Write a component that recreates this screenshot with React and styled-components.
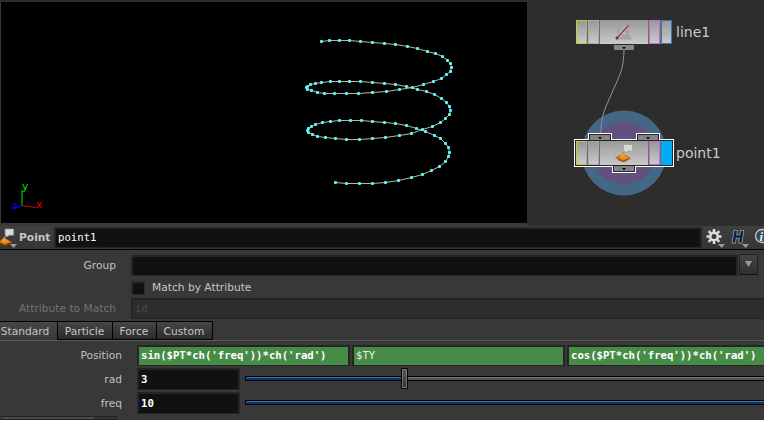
import React from 'react';
import styled, { createGlobalStyle, css } from 'styled-components';

const Global = createGlobalStyle`
  * { box-sizing: border-box; }
  html, body { margin: 0; background: #fff; overflow: hidden; }
  body { font-family: "DejaVu Sans", sans-serif; font-size: 10.67px; color: #c5c5c5; }
`;

const Window = styled.main`
  width: 764px;
  height: 420px;
  overflow: hidden;
  background: #383838;
`;

const Workspace = styled.section`
  display: flex;
  height: 226px;
  background: #2d2d2d;
`;

const ViewportPane = styled.div`
  width: 527px;
  padding: 2px 0 3px 1px;
  background: linear-gradient(#2d2d2d 2px, #383838 2px);
`;

const Viewport = styled.svg`
  display: block;
  width: 526px;
  height: 221px;
  background: #000;
`;

const Network = styled.div`
  position: relative;
  flex: 1;
  overflow: hidden;
`;

const Layer = styled.svg`
  position: absolute;
  inset: 0;
  width: 237px;
  height: 226px;
`;

const Node = styled.div`
  position: absolute;
  left: 49px;
  top: ${(p) => p.$top}px;
  display: flex;
  align-items: center;
  height: 24px;
`;

const NodeBody = styled.div`
  display: flex;
  gap: 1px;
  width: 96px;
  height: 24px;
  background: #6d6d6d;
`;

const metal = css`background: linear-gradient(#999, #cacaca);`;

const Flag = styled.div`
  width: 11px;
  border: 1px solid ${(p) => p.$color};
  ${metal}
  ${(p) => p.$open && css`border-right-color: #a9a9a9;`}
  ${(p) => p.$on && css`background: ${p.$color};`}
`;

const NodeFace = styled.div`
  flex: 1;
  display: grid;
  place-items: center;
  ${metal}
`;

const NodeName = styled.span`
  margin-left: 4px;
  font-size: 14px;
  line-height: 20px;
  color: #c9c9c9;
`;

const Header = styled.header`
  display: flex;
  align-items: flex-start;
  height: 24px;
  padding-top: 1px;
  border-bottom: 1px solid #000;
  background: linear-gradient(#404040, #343434);
`;

const HeaderIcon = styled.svg`
  flex: none;
  width: ${(p) => p.$w}px;
  height: 22px;
`;

const OperatorType = styled.b`
  width: 35px;
  line-height: 21px;
  white-space: nowrap;
`;

const Field = styled.div`
  flex: none;
  width: ${(p) => p.$w}px;
  height: ${(p) => p.$h || 21}px;
  padding-left: 2px;
  border: 2px solid #252525;
  border-bottom-width: 1px;
  background: ${(p) => p.$bg || '#111'};
  color: ${(p) => p.$fg || '#fff'};
  font: ${(p) => (p.$bold ? 'bold' : 'normal')} 10.67px/${(p) => p.$line || 18}px "DejaVu Sans Mono", monospace;
  letter-spacing: ${(p) => (p.$bold ? '-0.02px' : 'normal')};
  white-space: pre;
  overflow: hidden;
`;

const Row = styled.div`
  display: flex;
  align-items: center;
  height: ${(p) => p.$h}px;
  margin-bottom: ${(p) => p.$after || 0}px;
`;

const Label = styled.span`
  flex: none;
  width: ${(p) => p.$w}px;
  margin-right: 15px;
  text-align: right;
  color: ${(p) => (p.$dim ? '#747474' : '#c0c0c0')};
`;

const Parameters = styled.section`
  height: 71px;
  padding-top: 4px;
`;

const MenuButton = styled.button`
  display: grid;
  place-items: center;
  width: 19px;
  height: 21px;
  margin: -2px 0 0 1px;
  padding: 0 0 1px;
  border: 1px solid #222;
  border-bottom-color: #111;
  background: linear-gradient(#424242, #303030);
`;

const CheckBox = styled.span`
  width: 14px;
  height: 14px;
  margin-right: 7px;
  border: 2px solid #292929;
  border-right-width: 1px;
  border-bottom-width: 1px;
  background: #111;
`;

const Tabs = styled.nav`
  display: flex;
  height: 20px;
  border-bottom: 1px solid #585858;
`;

const Tab = styled.button`
  width: ${(p) => p.$w}px;
  height: 19px;
  padding: ${(p) => (p.$active ? '1px 7px 0 0' : '1px 1px 0 0')};
  border: solid #000;
  border-width: ${(p) => (p.$active ? '1px 0 0' : '1px 1px 1px 0')};
  ${(p) => p.$first && css`border-left-width: 1px;`}
  background: ${(p) => (p.$active ? 'linear-gradient(#464646, #383838)' : 'linear-gradient(#464646, #2b2b2b)')};
  color: #c5c5c5;
  font: 10.67px/17px "DejaVu Sans", sans-serif;
  white-space: nowrap;
`;

const Channels = styled.section`
  padding-top: 4px;
`;

const Vector = styled.div`
  display: flex;
  gap: 2px;
`;

const Slider = styled.div`
  flex: 1;
  display: flex;
  align-items: center;
  height: 21px;
  margin: 0 0 1px 5px;
`;

const Track = styled.div`
  flex: ${(p) => (p.$w ? `0 0 ${p.$w}px` : 1)};
  height: 5px;
  border: solid #000;
  border-width: 1px 0 1px ${(p) => (p.$start ? 1 : 0)}px;
  background: ${(p) => (p.$filled ? 'linear-gradient(#526f91 1px, #073671 1px)' : 'linear-gradient(#777 1px, #505050 1px)')};
`;

const Handle = styled.div`
  flex: none;
  width: 7px;
  height: 21px;
  border: 1px solid #000;
  border-radius: 1px;
  box-shadow: inset 0 0 0 1px #747474;
  background: linear-gradient(#555, #333);
`;

const NextControl = styled.div`
  display: flex;
  width: 116px;
  height: 4px;
  margin: 1px 0 0 1px;
  border: 1px solid #222;
  background: #333;
  &::before { content: ''; width: 92px; background: #4b4b4b; }
`;

const points = [
  [321,41],[329,40],[339,40],[349,40],[360,41],[372,42],[384,43],[395,44],[407,46],[417,48],
  [427,51],[435,53],[442,56],[447,60],[450,63],[451,67],[450,71],[446,74],[441,78],[433,81],
  [423,84],[412,87],[399,89],[386,91],[372,92],[358,93],[346,93],[334,93],[324,93],[317,92],
  [311,90],[307,89],[306,87],[307,86],[310,84],[315,83],[321,82],[330,81],[339,81],[349,81],
  [360,81],[372,82],[384,83],[395,84],[406,86],[417,89],[426,91],[434,94],[441,98],[446,102],
  [449,106],[450,110],[449,114],[445,118],[440,122],[432,126],[422,129],[411,133],[399,135],
  [385,137],[372,138],[359,139],[346,139],[335,138],[325,137],[317,136],[312,134],[308,132],
  [307,130],[308,128],[311,126],[315,124],[322,122],[330,121],[339,120],[350,120],[361,120],
  [372,121],[384,122],[395,123],[406,125],[416,128],[425,131],[434,135],[440,138],[445,143],
  [448,147],[449,152],[448,156],[445,161],[439,166],[431,170],[422,174],[411,177],[398,180],
  [385,182],[372,183],[359,183],[346,183],[335,182],
];

const Triangle = ({ x, y, fill = '#999' }) => <path d={`M${x} ${y}h7l-3.5 4z`} fill={fill} />;

function PointGlyph() {
  return (
    <g>
      <path d="M0 14 5.500 11h5L16 14.500 8.500 18z" fill="#bd5d10" />
      <path d="M3 13.800 7 11.500h3l3.500 2.500-5 2z" fill="#f98f1d" />
      <path d="M3 15.500 8.500 18 13 15.500" stroke="#874207" strokeWidth=".8" fill="none" />
      <path d="M7.500 12V9.500L11.500 6" stroke="#9e9169" strokeWidth="1.500" fill="none" />
      <path d="M8.500 .5h9v6.500H13l-2.500 2-1-2h-1z" fill="#d8dad4" stroke="#999" strokeWidth=".6" />
      <circle cx="7.500" cy="11.500" r="1.800" fill="#d6ad34" />
    </g>
  );
}

function LineGlyph() {
  return (
    <svg width="20" height="20" viewBox="0 0 20 20">
      <path d="M4.500 1v15.500h13M4 11l4 5M5 12l9 3V8M11 7l4 8" stroke="#a2a0a0" strokeWidth="2" fill="none" />
      <path d="m3 16 11-12" stroke="#e5c5bb" strokeWidth="3" />
      <path d="m3 16 11-12" stroke="#5b4545" strokeWidth="1.500" />
      <path d="m7 11 6-7" stroke="#b16962" strokeDasharray="2 2" />
      <circle cx="3" cy="16" r="1.500" fill="#4c3535" />
      <circle cx="14" cy="4" r="1.500" fill="#bd6558" />
    </svg>
  );
}

function NetworkNode({ top, name, displayed, children }) {
  return (
    <Node $top={top}>
      <NodeBody>
        <Flag $color="#c9c832" $open />
        <Flag $color="#aaa" />
        <NodeFace>{children}</NodeFace>
        <Flag $color="#cf6bd0" />
        <Flag $color={displayed ? '#00adf5' : '#3479b5'} $on={displayed} />
      </NodeBody>
      <NodeName>{name}</NodeName>
    </Node>
  );
}

function SceneView() {
  return (
    <ViewportPane>
      <Viewport viewBox="1 2 526 221">
        <polyline points={points.map(([x, y]) => `${x + 0.5},${y + 0.5}`).join(' ')} fill="none" stroke="#b9b5a3" />
        {points.map(([x, y], i) => (
          <rect key={i} x={x - 1} y={y - 1} width="3" height="3" rx=".9" fill="#5bf5f5" />
        ))}
        <path d="M22 190v15.500" stroke="#00ad00" strokeWidth="1.400" />
        <path d="m22 205.500 14 2" stroke="#e00000" strokeWidth="1.200" />
        <path d="m22 205.500-9 3" stroke="#0000e8" strokeWidth="1.500" />
        <g fontFamily="DejaVu Sans" fontSize="10.500">
          <text x="22" y="190" fill="#00e900">y</text>
          <text x="36" y="208" fill="#e60000">x</text>
          <text x="12" y="209" fontSize="10" fill="#0000f0">z</text>
        </g>
      </Viewport>
    </ViewportPane>
  );
}

function NetworkView() {
  return (
    <Network>
      <Layer viewBox="527 0 237 226">
        <circle cx="624" cy="153" r="42.500" fill="#446787" />
        <circle cx="624" cy="153" r="31.500" fill="#62507f" />
        <path d="M624 50C623.500 67 621 72 618 79L607 104C602 115 601.500 122 600.500 134" fill="none" stroke="#929292" />
        <path d="M614 45h20v5h-20z" fill="#888" />
        <path d="M588 139v-6h24v6h24v-6h24v6h14v28h-38v6h-24v-6h-38v-28z" fill="#fff" />
        <path d="M589 134h22v6h-22zM637 134h22v6h-22zM613 166h22v6h-22zM575 140h98v26h-98z" fill="#262626" />
        <path d="M590 135h20v5h-20zM638 135h20v5h-20zM614 166h20v5h-20z" fill="#858585" />
        <path d="M622.500 47h3v1l-1.500 1-1.500-1zM598.500 137h3v1l-1.500 1-1.500-1zM646.500 137h3v1l-1.500 1-1.500-1zM622.500 168h3v1l-1.500 1-1.500-1z" fill="#050505" />
      </Layer>
      <NetworkNode top={20} name="line1"><LineGlyph /></NetworkNode>
      <NetworkNode top={141} name="point1" displayed>
        <svg width="18" height="18" viewBox="0 0 18 18"><PointGlyph /></svg>
      </NetworkNode>
    </Network>
  );
}

function OperatorBar() {
  return (
    <Header>
      <HeaderIcon $w={19} viewBox="0 227 19 22">
        <g transform="translate(-3 228.500) scale(.95)"><PointGlyph /></g>
        <Triangle x={10} y={244} />
      </HeaderIcon>
      <OperatorType>Point</OperatorType>
      <Field $w={648}>point1</Field>
      <HeaderIcon $w={62} viewBox="702 227 62 22">
        <g fill="none" stroke="#ddd">
          <circle cx="714" cy="236.500" r="3.800" strokeWidth="2.600" />
          {[0, 45, 90, 135, 180, 225, 270, 315].map((a) => (
            <path key={a} d="M714 232v-3" strokeWidth="2.500" transform={`rotate(${a} 714 236.500)`} />
          ))}
        </g>
        <Triangle x={718} y={244} />
        <g fill="none" strokeLinecap="square">
          <path d="m735.500 232-1.500 9.500M742 232l-1.500 9.500M735 236.500h6" stroke="#a3abb5" strokeWidth="4" />
          <path d="m735.500 232-1.500 9.500M742 232l-1.500 9.500M735 236.500h6" stroke="#0b2340" strokeWidth="2.600" />
        </g>
        <Triangle x={742} y={244} />
        <circle cx="762" cy="236" r="6.500" fill="#344b59" stroke="#c9c9c9" strokeWidth="1.300" />
        <text x="759.500" y="240.500" fontFamily="Liberation Serif" fontWeight="bold" fontStyle="italic" fontSize="13" fill="#eee">i</text>
      </HeaderIcon>
    </Header>
  );
}

export default function App() {
  return (
    <Window>
      <Global />
      <Workspace>
        <SceneView />
        <NetworkView />
      </Workspace>
      <OperatorBar />
      <Parameters>
        <Row $h={23}>
          <Label $w={116}>Group</Label>
          <Field $w={607} />
          <MenuButton aria-label="Choose group">
            <svg width="7" height="6"><path d="M0 0h7L3.500 6z" fill="#999" /></svg>
          </MenuButton>
        </Row>
        <Row $h={21}>
          <Label $w={116} />
          <CheckBox />
          <span>Match by Attribute</span>
        </Row>
        <Row $h={21}>
          <Label $w={116} $dim>Attribute to Match</Label>
          <Field $w={640} $bg="#2d2d2d" $fg="#484848">id</Field>
        </Row>
      </Parameters>
      <Tabs>
        <Tab $w={57} $active>Standard</Tab>
        <Tab $w={56} $first>Particle</Tab>
        <Tab $w={44}>Force</Tab>
        <Tab $w={56}>Custom</Tab>
      </Tabs>
      <Channels>
        <Row $h={21} $after={1}>
          <Label $w={122}>Position</Label>
          <Vector>
            <Field $w={213} $bg="#468c46" $bold>{"sin($PT*ch('freq'))*ch('rad')"}</Field>
            <Field $w={213} $bg="#468c46" $fg="#e7eee7">$TY</Field>
            <Field $w={213} $bg="#468c46" $bold>{"cos($PT*ch('freq'))*ch('rad')"}</Field>
          </Vector>
        </Row>
        <Row $h={24}>
          <Label $w={122}>rad</Label>
          <Field $w={103} $h={22} $line={19} $bold>3</Field>
          <Slider><Track $w={156} $filled $start /><Handle /><Track /></Slider>
        </Row>
        <Row $h={24}>
          <Label $w={122}>freq</Label>
          <Field $w={103} $h={22} $line={19} $bold>10</Field>
          <Slider><Track $filled $start /></Slider>
        </Row>
        <NextControl />
      </Channels>
    </Window>
  );
}
